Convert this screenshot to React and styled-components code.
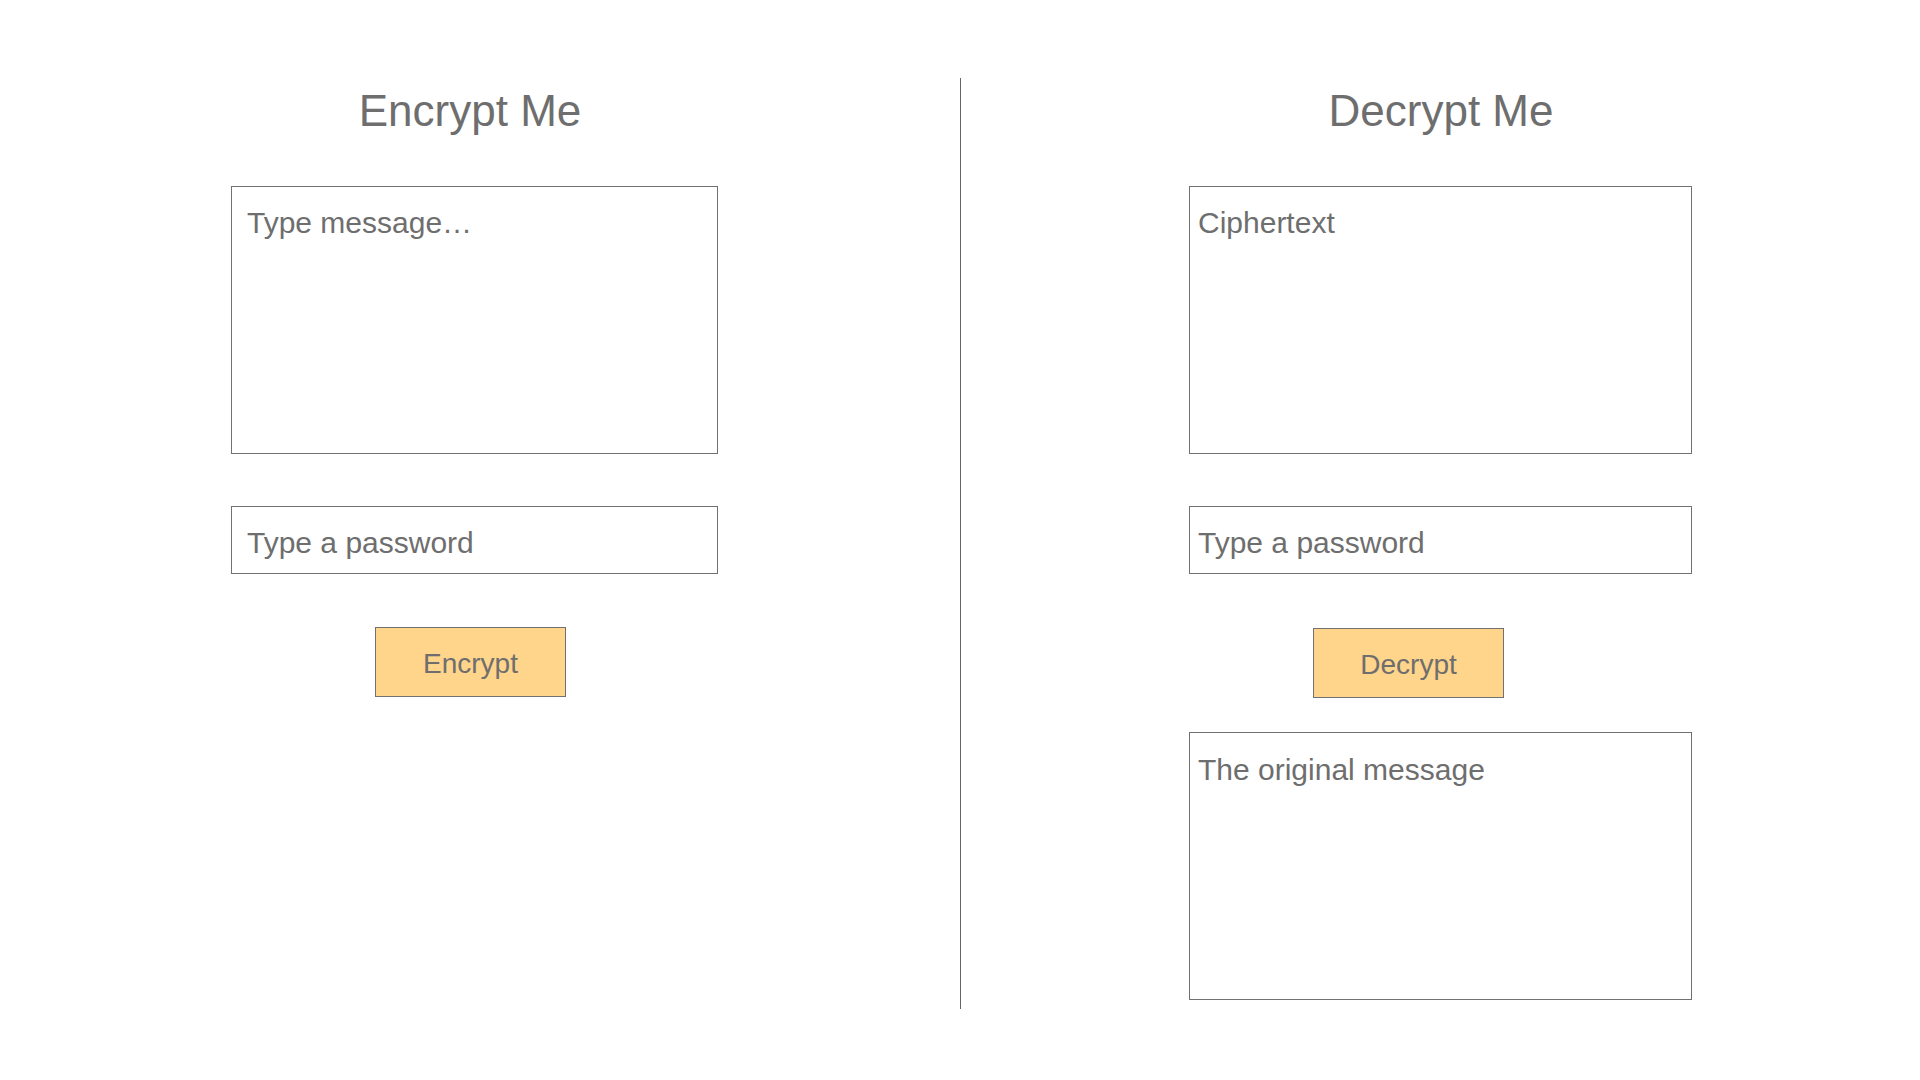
import React from 'react';
import styled, { createGlobalStyle } from 'styled-components';

const TEXT_GREY = '#6e6e6e';
const BORDER_GREY = '#717171';
const BUTTON_FILL = '#ffd48b';

const GlobalStyle = createGlobalStyle`
  html, body {
    margin: 0;
    padding: 0;
    background: #ffffff;
  }

  body {
    font-family: 'Liberation Sans', Arial, Helvetica, sans-serif;
    color: ${TEXT_GREY};
  }

  * {
    box-sizing: border-box;
  }
`;

const Page = styled.main`
  display: flex;
  height: 100vh;
  padding: 78px 0 71px;
  background: #ffffff;
`;

const Panel = styled.section`
  display: flex;
  flex-direction: column;
  align-items: flex-start;
  width: ${(p) => p.$width}px;
  padding: 11px 0 0 ${(p) => p.$inset}px;
`;

const Divider = styled.div`
  width: 1px;
  background: #666666;
  flex-shrink: 0;
`;

const Heading = styled.h1`
  width: ${(p) => p.$width}px;
  height: 44px;
  margin: 0 0 53px;
  font-size: 44px;
  line-height: 44px;
  font-weight: 400;
  text-align: center;
  color: ${TEXT_GREY};
`;

const TextBox = styled.textarea`
  display: block;
  width: ${(p) => p.$width}px;
  height: 268px;
  margin: ${(p) => p.$mt || 0}px 0 0;
  padding: ${(p) => p.$pt || 18}px ${(p) => p.$padX}px 0;
  border: 1px solid ${BORDER_GREY};
  border-radius: 0;
  outline: none;
  resize: none;
  background: #ffffff;
  font-family: 'Liberation Sans', Arial, sans-serif;
  font-size: 30px;
  line-height: 36px;
  color: ${TEXT_GREY};

  &::placeholder {
    color: ${TEXT_GREY};
    opacity: 1;
  }
`;

const PasswordInput = styled.input`
  display: block;
  width: ${(p) => p.$width}px;
  height: 68px;
  margin-top: 52px;
  padding: 5px ${(p) => p.$padX}px 0;
  border: 1px solid ${BORDER_GREY};
  border-radius: 0;
  outline: none;
  background: #ffffff;
  font-family: 'Liberation Sans', Arial, sans-serif;
  font-size: 30px;
  color: ${TEXT_GREY};

  &::placeholder {
    color: ${TEXT_GREY};
    opacity: 1;
  }
`;

const ActionButton = styled.button`
  width: 191px;
  height: 70px;
  margin: ${(p) => p.$mt}px 0 0 ${(p) => p.$offset}px;
  padding: 4px 0 0;
  border: 1px solid ${BORDER_GREY};
  border-radius: 0;
  background: ${BUTTON_FILL};
  font-family: 'Liberation Sans', Arial, sans-serif;
  font-size: 28px;
  color: ${TEXT_GREY};
  cursor: pointer;
`;

const App = () => (
  <>
    <GlobalStyle />
    <Page>
      <Panel $width={960} $inset={231}>
        <Heading $width={478}>Encrypt Me</Heading>
        <TextBox $width={487} $padX={15} placeholder="Type message…" />
        <PasswordInput type="password" $width={487} $padX={15} placeholder="Type a password" />
        <ActionButton $mt={53} $offset={144}>Encrypt</ActionButton>
      </Panel>
      <Divider />
      <Panel $width={959} $inset={228}>
        <Heading $width={504}>Decrypt Me</Heading>
        <TextBox $width={503} $padX={8} placeholder="Ciphertext" />
        <PasswordInput type="password" $width={503} $padX={8} placeholder="Type a password" />
        <ActionButton $mt={54} $offset={124}>Decrypt</ActionButton>
        <TextBox $width={503} $padX={8} $mt={34} $pt={19} readOnly placeholder="The original message" />
      </Panel>
    </Page>
  </>
);

export default App;
